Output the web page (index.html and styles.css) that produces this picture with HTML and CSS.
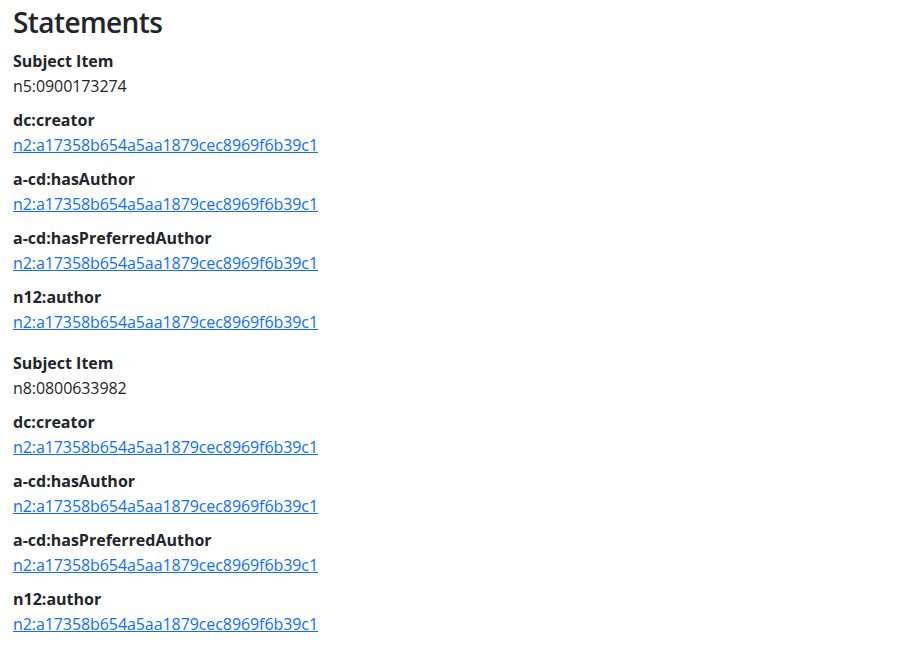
FILE: index.html
```html
<!DOCTYPE html>
<html lang="en">
<head>
<meta charset="utf-8">
<title>Statements</title>
<link rel="stylesheet" href="styles.css">
</head>
<body>
<main class="page">
  <h3 class="title">Statements</h3>
  <dl class="subject">
    <dt>Subject Item</dt>
    <dd>n5:0900173274</dd>
    <dt>dc:creator</dt>
    <dd><a href="#">n2:a17358b654a5aa1879cec8969f6b39c1</a></dd>
    <dt>a-cd:hasAuthor</dt>
    <dd><a href="#">n2:a17358b654a5aa1879cec8969f6b39c1</a></dd>
    <dt>a-cd:hasPreferredAuthor</dt>
    <dd><a href="#">n2:a17358b654a5aa1879cec8969f6b39c1</a></dd>
    <dt>n12:author</dt>
    <dd><a href="#">n2:a17358b654a5aa1879cec8969f6b39c1</a></dd>
  </dl>
  <dl class="subject">
    <dt>Subject Item</dt>
    <dd>n8:0800633982</dd>
    <dt>dc:creator</dt>
    <dd><a href="#">n2:a17358b654a5aa1879cec8969f6b39c1</a></dd>
    <dt>a-cd:hasAuthor</dt>
    <dd><a href="#">n2:a17358b654a5aa1879cec8969f6b39c1</a></dd>
    <dt>a-cd:hasPreferredAuthor</dt>
    <dd><a href="#">n2:a17358b654a5aa1879cec8969f6b39c1</a></dd>
    <dt>n12:author</dt>
    <dd><a href="#">n2:a17358b654a5aa1879cec8969f6b39c1</a></dd>
  </dl>
</main>
</body>
</html>
```
FILE: styles.css
```css
html, body {
  margin: 0;
  padding: 0;
  background: #fff;
}
body {
  font-family: "Open Sans", "Noto Sans", sans-serif;
  font-size: 16px;
  line-height: 24px;
  color: #212529;
}
.page {
  padding: 5px 13px 0;
}
.title {
  margin: 0 0 10px;
  font-size: 28px;
  line-height: 34px;
  font-weight: 600;
  letter-spacing: -0.6px;
}
.subject {
  margin: 0 0 17px;
}
.subject dt {
  font-weight: 700;
}
.subject dd {
  margin: 1px 0 10px;
  letter-spacing: -0.08px;
}
.subject a {
  color: #0d6efd;
  text-decoration: underline;
}
```
